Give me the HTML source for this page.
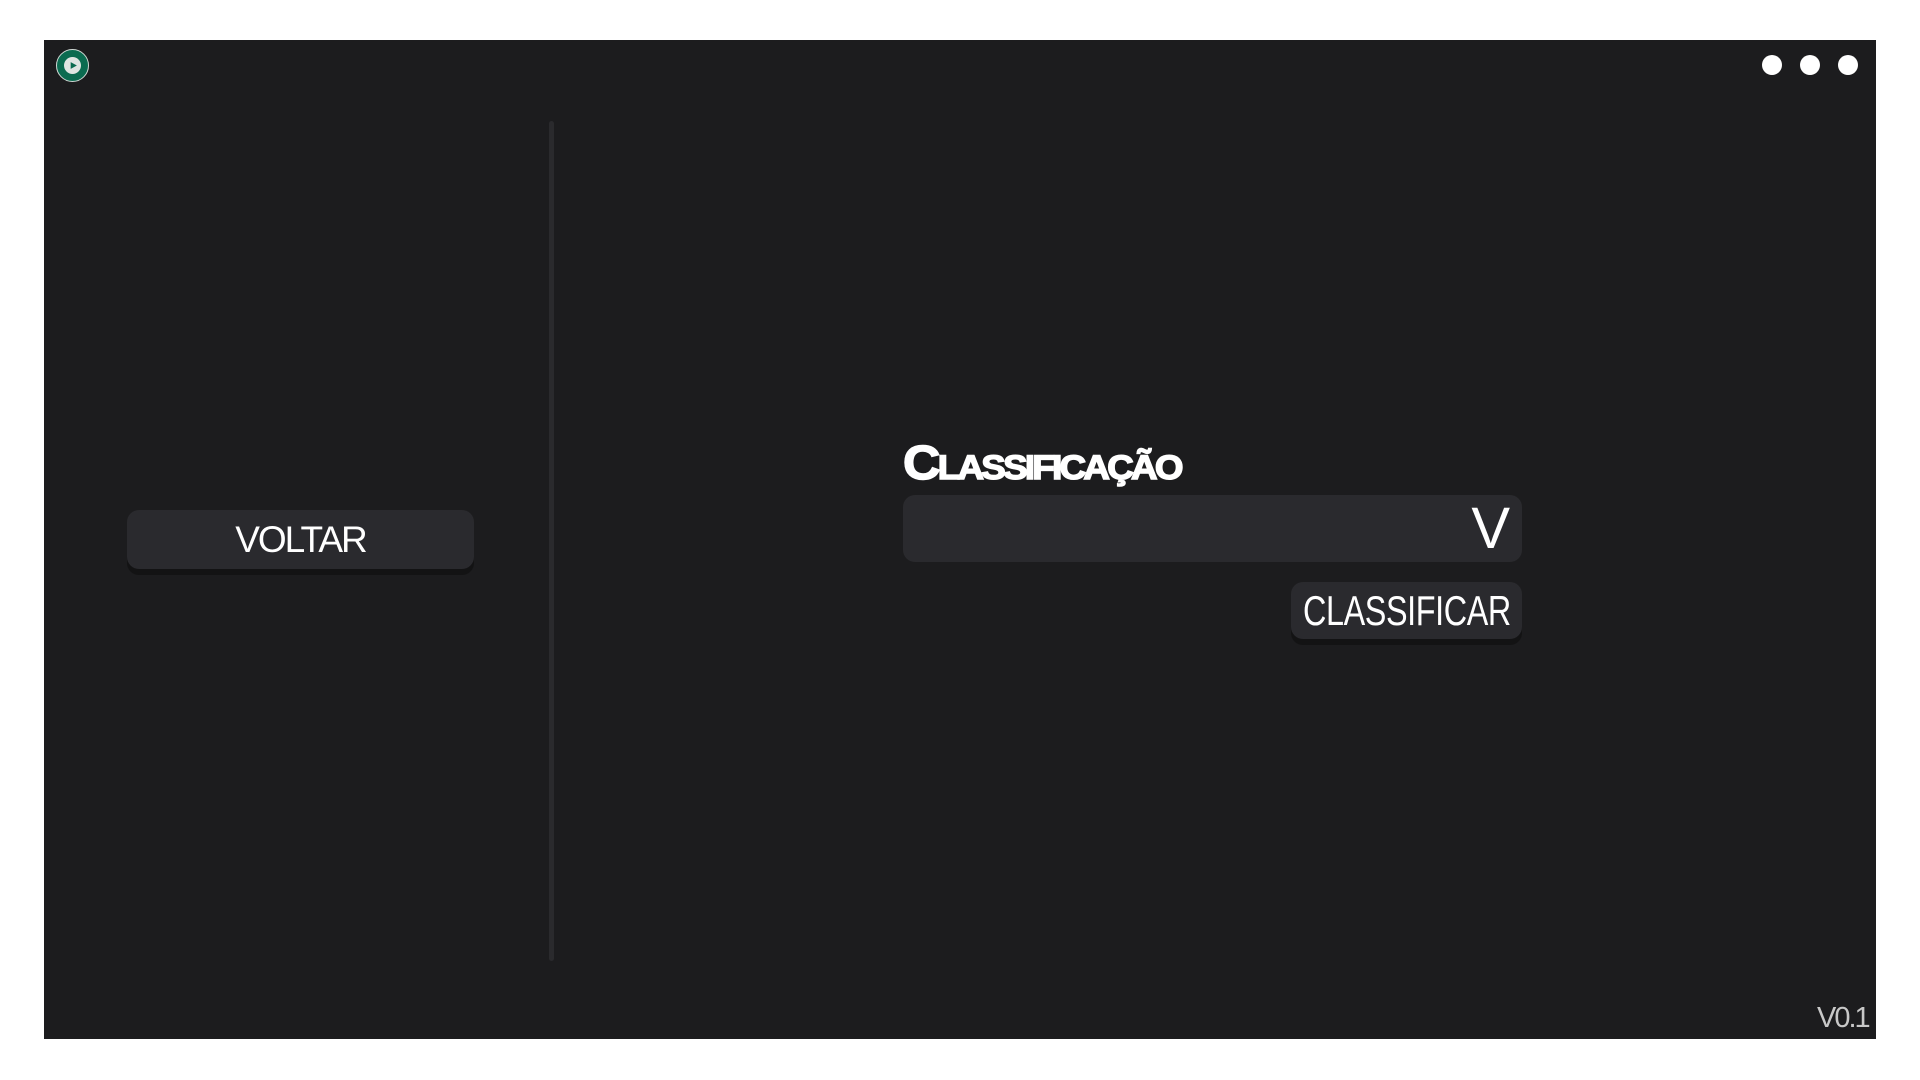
<!DOCTYPE html>
<html><head><meta charset="utf-8"><style>
*{margin:0;padding:0;box-sizing:border-box}
body{width:1920px;height:1080px;background:#fff;position:relative;overflow:hidden;font-family:"Liberation Sans",sans-serif;color:#fff}
.panel{position:absolute;left:44px;top:40px;width:1832px;height:999px;background:#1c1c1e}
.abs{position:absolute}
.dot{position:absolute;top:55px;width:20px;height:20px;border-radius:50%;background:#fff}
.btn{position:absolute;background:#2a2a2e;border-radius:12px;box-shadow:0 6px 0 #131314;display:flex;align-items:center;justify-content:center;white-space:nowrap}
</style></head><body>
<div class="panel"></div>
<div class="abs" style="left:56px;top:49px;width:33px;height:33px;border-radius:50%;background:#0b6b50;border:1px solid #cfd8d4"></div>
<div class="abs" style="left:64px;top:57px;width:17px;height:17px;border-radius:50%;background:#dfe5e2"></div>
<svg class="abs" style="left:69px;top:61px" width="9" height="9" viewBox="0 0 8 8"><path d="M1.5 1 L7 4 L1.5 7Z" fill="#0b6b50"/></svg>
<div class="dot" style="left:1762px"></div>
<div class="dot" style="left:1800px"></div>
<div class="dot" style="left:1838px"></div>
<div class="abs" style="left:549px;top:121px;width:5px;height:840px;background:#2a2a2d;border-radius:3px"></div>
<div class="btn" style="left:127px;top:510px;width:347px;height:59px;font-size:37px;letter-spacing:-2px">VOLTAR</div>
<div class="abs" style="left:903px;top:437px;font-size:48px;font-weight:bold;font-variant:small-caps;letter-spacing:-2.5px;transform:scaleX(1.08);transform-origin:left;line-height:54px;-webkit-text-stroke:1.5px #fff">Classificação</div>
<div class="abs" style="left:903px;top:495px;width:619px;height:67px;background:#2a2a2e;border-radius:12px"></div>
<div class="abs" style="left:1410px;top:497px;font-size:58px;line-height:64px;width:100px;text-align:right">V</div>
<div class="btn" style="left:1291px;top:582px;width:231px;height:57px"><span style="font-size:42px;display:inline-block;transform:scaleX(0.77);letter-spacing:-0.5px">CLASSIFICAR</span></div>
<div class="abs" style="left:1817px;top:1002px;font-size:29px;color:#c8c8c8;letter-spacing:-2px">V0.1</div>
</body></html>
